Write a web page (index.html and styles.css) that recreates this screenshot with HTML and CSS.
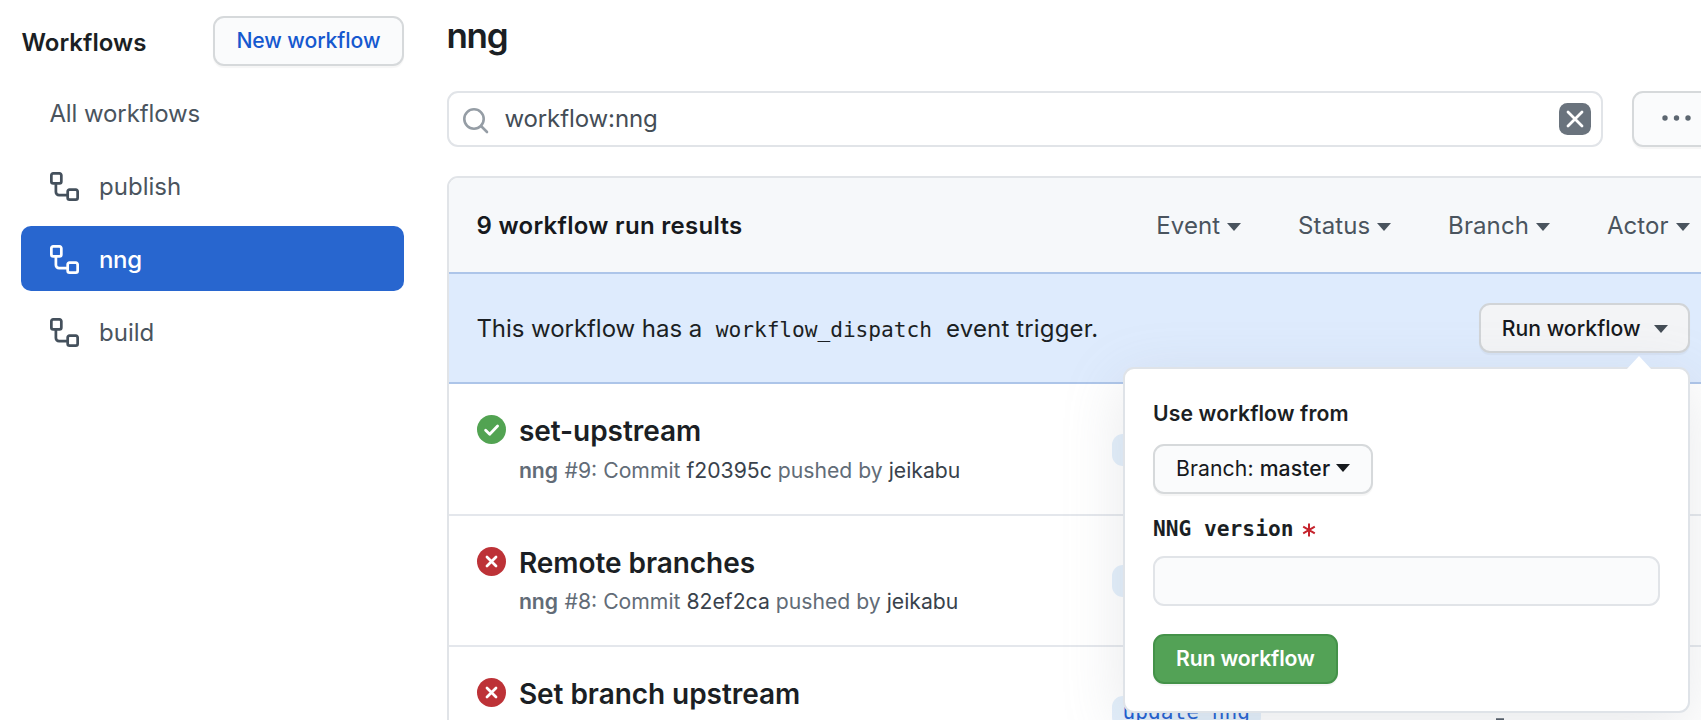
FILE: index.html
```
<!DOCTYPE html>
<html lang="en">
<head>
<meta charset="utf-8">
<title>Workflow runs</title>
<link rel="stylesheet" href="styles.css">
</head>
<body>
<svg class="defs" aria-hidden="true">
  <symbol id="workflow" viewBox="0 0 16 16"><path fill-rule="evenodd" d="M0 1.75C0 .784.784 0 1.75 0h3.5C6.216 0 7 .784 7 1.75v3.5A1.75 1.75 0 015.25 7H4v4a1 1 0 001 1h4v-1.250C9 9.784 9.784 9 10.750 9h3.5c.966 0 1.750.784 1.750 1.750v3.5A1.750 1.750 0 0114.250 16h-3.5A1.750 1.750 0 019 14.250v-.75H5A2.5 2.5 0 012.500 11V7h-.750A1.750 1.750 0 010 5.250v-3.500zm1.750-.250a.250.250 0 00-.250.250v3.500c0 .138.112.250.250.250h3.500a.250.250 0 00.250-.250v-3.500a.250.250 0 00-.250-.250h-3.500zm9 9a.250.250 0 00-.250.250v3.500c0 .138.112.250.250.250h3.500a.250.250 0 00.250-.250v-3.500a.250.250 0 00-.250-.250h-3.500z"/></symbol>
  <symbol id="fail" viewBox="0 0 16 16"><circle cx="8" cy="8" r="8" fill="#bd3237"/><path d="M5.500 5.500l5 5m0-5l-5 5" stroke="#fff" stroke-width="1.500" stroke-linecap="round"/></symbol>
  <symbol id="ok" viewBox="0 0 16 16"><circle cx="8" cy="8" r="8" fill="#52a352"/><path d="M4.750 8.400L7 10.600l4.350-4.500" fill="none" stroke="#fff" stroke-width="1.550" stroke-linecap="round" stroke-linejoin="round"/></symbol>
</svg>
<div class="layout">
  <aside class="sidebar">
    <div class="sidebar-head">
      <h2>Workflows</h2>
      <button class="btn btn-new">New workflow</button>
    </div>
    <nav class="menu">
      <a class="item">All workflows</a>
      <a class="item"><svg class="flow"><use href="#workflow"/></svg>publish</a>
      <a class="item selected"><svg class="flow"><use href="#workflow"/></svg>nng</a>
      <a class="item"><svg class="flow"><use href="#workflow"/></svg>build</a>
    </nav>
  </aside>
  <main class="main">
    <h1>nng</h1>
    <div class="toolbar">
      <div class="search">
        <svg class="magnifier" viewBox="0 0 26 26"><circle cx="11" cy="11" r="9.700"/><path d="M18 18l6 6"/></svg>
        <span>workflow:nng</span>
        <svg class="clear" viewBox="0 0 32 32"><rect width="32" height="32" rx="8.500"/><path d="M9 9l14 14m0-14l-14 14"/></svg>
      </div>
      <button class="btn more"><svg viewBox="0 0 29 6"><circle cx="3" cy="3" r="2.700"/><circle cx="14.500" cy="3" r="2.700"/><circle cx="26" cy="3" r="2.700"/></svg></button>
    </div>
    <section class="box">
      <header class="box-head">
        <strong>9 workflow run results</strong>
        <div class="filters">
          <span>Event<i class="caret"></i></span>
          <span>Status<i class="caret"></i></span>
          <span>Branch<i class="caret"></i></span>
          <span>Actor<i class="caret"></i></span>
        </div>
      </header>
      <div class="dispatch">
        <p>This workflow has a <code>workflow_dispatch</code> <span class="tail">event trigger.</span></p>
        <div class="run-menu">
          <button class="btn btn-run">Run workflow<i class="caret"></i></button>
          <form class="popover">
            <svg class="arrow" viewBox="0 0 26 14"><path d="M0 14L13 0l13 14z"/></svg>
            <strong class="label">Use workflow from</strong>
            <button class="btn btn-branch" type="button"><span>Branch:</span>master<i class="caret"></i></button>
            <label class="field-label" for="version">NNG version<svg class="star" viewBox="0 0 14 14"><path d="M7 .5v13M1.200 3.600l11.600 6.800m0-6.800L1.200 10.400"/></svg></label>
            <input id="version" class="field" type="text">
            <button class="btn btn-primary" type="button">Run workflow</button>
          </form>
        </div>
      </div>
      <article class="row">
        <svg class="state"><use href="#ok"/></svg>
        <div class="info"><h3>set-upstream</h3><p><b>nng</b> #9: Commit <a>f20395c</a> pushed by <a>jeikabu</a></p></div>
        <span class="branch"></span>
      </article>
      <article class="row">
        <svg class="state"><use href="#fail"/></svg>
        <div class="info"><h3>Remote branches</h3><p><b>nng</b> #8: Commit <a>82ef2ca</a> pushed by <a>jeikabu</a></p></div>
        <span class="branch"></span>
      </article>
      <article class="row">
        <svg class="state"><use href="#fail"/></svg>
        <div class="info"><h3>Set branch upstream</h3></div>
        <span class="branch">update_nng</span>
        <svg class="watch" viewBox="0 0 24 29"><path d="M8 1.500h8M12 2v5"/><circle cx="12" cy="17" r="10"/><path d="M12 12v5l3 2"/></svg>
      </article>
    </section>
  </main>
</div>
</body>
</html>
```
FILE: styles.css
```
* { box-sizing: border-box; }
body {
  margin: 0;
  background: #fff;
  color: #1b1f24;
  font: 400 24px/36px Inter, "Liberation Sans", sans-serif;
}
h1, h2, h3, p { margin: 0; }
svg { display: block; flex: none; }
.defs { position: absolute; width: 0; height: 0; }
.layout {
  display: flex;
  gap: 43px;
  width: 1701px;
  height: 720px;
  padding-left: 21.400px;
  overflow: hidden;
}

/* Buttons */
.btn {
  display: flex;
  align-items: center;
  justify-content: center;
  height: 50px;
  padding: 0 22px 1px;
  border: 2px solid #d6d9db;
  border-radius: 11px;
  background: #fafbfc;
  box-shadow: 0 2px 1px rgba(27, 31, 35, .04);
  color: #16191d;
  font: 500 21.200px/30px Inter, sans-serif;
  letter-spacing: .1px;
  white-space: nowrap;
}
.caret {
  flex: none;
  width: 0;
  margin-top: 2px;
  border: 7px solid transparent;
  border-top: 8px solid currentColor;
  border-bottom: 0;
}

/* Sidebar */
.sidebar { flex: none; width: 382.500px; padding-top: 15.500px; }
.sidebar-head { display: flex; justify-content: space-between; align-items: center; }
h2 { padding-top: 5px; font-size: 24px; font-weight: 600; letter-spacing: .05px; }
.btn-new { width: 191px; padding-bottom: 2px; color: #1558cf; letter-spacing: -.1px; }
.menu { display: flex; flex-direction: column; gap: 8px; margin-top: 14.500px; }
.item {
  display: flex;
  align-items: center;
  gap: 20.500px;
  height: 65px;
  padding: 2px 28px 0;
  border-radius: 10px;
  color: #4a545e;
}
.item:first-child { letter-spacing: -.1px; }
.flow { width: 29px; height: 29px; margin: -1px 0 0 .200px; fill: #44505c; }
.selected { background: #2866cf; color: #fff; font-weight: 500; letter-spacing: -.4px; }
.selected .flow { fill: #fff; }

/* Main column */
.main { flex: none; width: 1273px; padding-top: 15px; }
h1 { margin-left: -.500px; font-size: 35px; line-height: 40px; font-weight: 600; letter-spacing: -1.200px; }
.toolbar { display: flex; gap: 28.500px; margin-top: 35.500px; }
.search {
  display: flex;
  align-items: center;
  width: 1156.500px;
  height: 56.500px;
  padding: 0 10px 0 14px;
  border: 2px solid #e1e4e8;
  border-radius: 11px;
  color: #444d56;
}
.search span { flex: 1; margin: 1px 0 0 15.500px; letter-spacing: -.1px; }
.magnifier { width: 26px; height: 26px; margin-top: 4px; fill: none; stroke: #959da5; stroke-width: 2.600; stroke-linecap: round; }
.clear { width: 32px; height: 32px; fill: #6a737d; }
.clear path { stroke: #fff; stroke-width: 2.800; stroke-linecap: round; }
.more { width: 88px; height: 56.500px; padding: 0 28.300px 1px; justify-content: flex-start; }
.more svg { width: 29px; height: 6px; fill: #5c6670; }

/* Results */
.box { margin-top: 28.500px; border: 2px solid #e1e4e8; border-radius: 11px 11px 0 0; }
.box-head {
  display: flex;
  justify-content: space-between;
  align-items: center;
  height: 94px;
  padding: 3px 28px 0 27.500px;
  border-radius: 9px 9px 0 0;
  background: #f6f8fa;
}
.box-head strong { font-weight: 600; letter-spacing: .3px; color: #16191d; }
.filters { display: flex; gap: 56.700px; color: #4a545e; letter-spacing: .1px; }
.filters span { display: flex; align-items: center; gap: 7.200px; }
.dispatch {
  display: flex;
  justify-content: space-between;
  align-items: center;
  height: 112px;
  padding: 0 28px 0 27.500px;
  border-top: 2px solid #adc5e9;
  border-bottom: 2px solid #adc5e9;
  background: #deebfd;
}
.dispatch > p { padding-top: 2px; letter-spacing: -.05px; }
.tail { letter-spacing: .15px; }
code { margin: 0 7.500px 0 7px; font: 21.200px/30px "DejaVu Sans Mono", monospace; }
.run-menu { position: relative; }
.btn-run { width: 210.500px; gap: 13px; padding-bottom: 0; background: #f3f4f6; border-color: #d1d4d7; letter-spacing: .03px; }
.btn-run .caret { color: #444d56; }
.row { display: flex; height: 131.300px; padding: 31px 28px 0; }
.row:nth-child(3) { height: 130px; padding-top: 31.500px; }
.row + .row { border-top: 2px solid #e4e7ec; padding-top: 31px; }
.state { width: 29px; height: 29px; }
.info { width: 593.500px; margin-left: 13px; }
h3 { font-size: 28px; line-height: 32px; font-weight: 600; letter-spacing: -.05px; }
.info p { margin-top: 7.500px; font-size: 21.200px; line-height: 30px; color: #626c77; }
.info b { margin-right: .5px; font-weight: 600; }
.info a { color: #39424c; }
.branch {
  width: 149px;
  height: 32px;
  margin-top: 18.500px;
  padding: 0 10px;
  border-radius: 11px;
  background: #e3effb;
  color: #1558cf;
  font: 21.200px/31px "DejaVu Sans Mono", monospace;
}
.watch { width: 24px; height: 29px; margin: 40px 0 0 227px; fill: none; stroke: #4c5560; stroke-width: 2.600; }

/* Dispatch form */
.popover {
  position: absolute;
  top: 64.500px;
  right: 0;
  width: 567px;
  height: 346px;
  padding: 29px 27.500px 0 28.200px;
  border: 2px solid #dfe3e8;
  border-radius: 11px;
  background: #fff;
  box-shadow: 0 15px 60px rgba(149, 157, 165, .22);
}
.arrow { position: absolute; top: -13px; right: 36px; width: 26px; height: 14px; fill: #fff; }
.label { display: block; font-size: 21.200px; line-height: 30px; font-weight: 600; letter-spacing: .1px; }
.btn-branch { width: 220px; margin-top: 15.500px; }
.btn-branch span { margin-right: 6px; font-weight: 400; }
.btn-branch .caret { margin: 0 0 0 6px; }
.field-label { display: flex; align-items: center; margin-top: 20px; font: 700 21.200px/30px "DejaVu Sans Mono", monospace; }
.star { width: 14px; height: 14px; margin: 2px 0 0 9px; stroke: #c5232d; stroke-width: 2; }
.field {
  display: block;
  width: 507px;
  height: 50px;
  margin-top: 12px;
  border: 2px solid #e1e4e8;
  border-radius: 11px;
  background: #fafbfc;
}
.btn-primary { width: 184.500px; margin-top: 28px; border-color: #449249; background: #53a256; color: #fff; font-weight: 600; letter-spacing: -.15px; }
```
